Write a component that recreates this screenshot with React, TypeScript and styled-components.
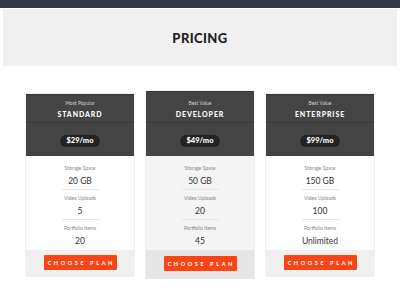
import React from "react";
import styled, { createGlobalStyle } from "styled-components";

const plans = [
  { tag: "Most Popular", name: "STANDARD", price: "$29/mo", storage: "20 GB", uploads: "5", items: "20" },
  { tag: "Best Value", name: "DEVELOPER", price: "$49/mo", storage: "50 GB", uploads: "20", items: "45", featured: true },
  { tag: "Best Value", name: "ENTERPRISE", price: "$99/mo", storage: "150 GB", uploads: "100", items: "Unlimited" }
];

const GlobalStyle = createGlobalStyle`
  body {
    margin: 0;
    background: #fff;
    font-family: Lato, "Open Sans", sans-serif;
  }
`;

const TopBar = styled.div`
  height: 8px;
  background: #343845;
`;

const Hero = styled.header`
  margin: 1px 3px 0;
  height: 57px;
  display: flex;
  align-items: center;
  justify-content: center;
  background: #f0f0f0;
`;

const Title = styled.h1`
  margin: 0;
  font-size: 13px;
  font-weight: 900;
  letter-spacing: 0.4px;
  color: #1f1f1f;
`;

const Plans = styled.section`
  display: flex;
  justify-content: center;
  align-items: center;
  gap: 12px;
  padding-top: 25px;
`;

const Card = styled.div<{ $featured?: boolean }>`
  width: 108px;
  display: flex;
  flex-direction: column;
  box-shadow: 0 0 1px rgba(0, 0, 0, 0.35);
  background: ${p => (p.$featured ? "#f4f4f4" : "#fff")};
`;

const Head = styled.div<{ $featured?: boolean }>`
  background: #444;
  border-top: 1px solid #363636;
  color: #fff;
  text-align: center;
  padding-top: ${p => (p.$featured ? "5px" : "2px")};
`;

const Naming = styled.div`
  height: 26px;
  display: flex;
  flex-direction: column;
  align-items: center;
  justify-content: center;
  gap: 3px;
  padding-bottom: 1px;
  box-sizing: border-box;
  border-bottom: 1px solid #393939;
`;

const Tag = styled.div`
  font-size: 5px;
  line-height: 7px;
  color: #cfcfcf;
`;

const Name = styled.div`
  font-size: 7px;
  line-height: 9px;
  font-weight: 900;
  letter-spacing: 0.9px;
`;

const PriceRow = styled.div`
  height: 33px;
  display: flex;
  align-items: center;
  justify-content: center;
  padding-top: 3px;
  box-sizing: border-box;
`;

const Price = styled.span`
  width: 40px;
  height: 12px;
  border-radius: 6px;
  background: #232323;
  font-size: 7.5px;
  font-weight: 900;
  line-height: 12px;
`;

const Body = styled.div`
  padding: 4px 0 1px;
  text-align: center;
`;

const Feature = styled.div`
  width: 37px;
  margin: 0 auto;
  padding: 4px 0 2px;
  & + & {
    border-top: 1px solid #e6e6e6;
  }
`;

const Label = styled.div`
  font-size: 5px;
  line-height: 8px;
  color: #888;
  white-space: nowrap;
  margin: 0 -20px;
`;

const Value = styled.div`
  margin: 3px -20px 0;
  font-size: 8.5px;
  line-height: 12px;
  color: #333;
  white-space: nowrap;
`;

const Foot = styled.div<{ $featured?: boolean }>`
  display: flex;
  justify-content: center;
  padding: ${p => (p.$featured ? "6px 0 8px" : "5px 0 6px")};
  background: ${p => (p.$featured ? "#e6e6e6" : "#efefef")};
`;

const Choose = styled.button`
  width: 73px;
  height: 15px;
  padding: 0;
  border: none;
  border-radius: 1px;
  background: #fb4415;
  color: #fff;
  font-family: Lato, sans-serif;
  font-size: 5.5px;
  font-weight: 900;
  letter-spacing: 2.6px;
  text-indent: 2.6px;
  cursor: pointer;
`;

export default function App() {
  return (
    <>
      <GlobalStyle />
      <TopBar />
      <Hero>
        <Title>PRICING</Title>
      </Hero>
      <Plans>
        {plans.map(plan => (
          <Card key={plan.name} $featured={plan.featured}>
            <Head $featured={plan.featured}>
              <Naming>
                <Tag>{plan.tag}</Tag>
                <Name>{plan.name}</Name>
              </Naming>
              <PriceRow>
                <Price>{plan.price}</Price>
              </PriceRow>
            </Head>
            <Body>
              <Feature>
                <Label>Storage Space</Label>
                <Value>{plan.storage}</Value>
              </Feature>
              <Feature>
                <Label>Video Uploads</Label>
                <Value>{plan.uploads}</Value>
              </Feature>
              <Feature>
                <Label>Portfolio Items</Label>
                <Value>{plan.items}</Value>
              </Feature>
            </Body>
            <Foot $featured={plan.featured}>
              <Choose>CHOOSE PLAN</Choose>
            </Foot>
          </Card>
        ))}
      </Plans>
    </>
  );
}
